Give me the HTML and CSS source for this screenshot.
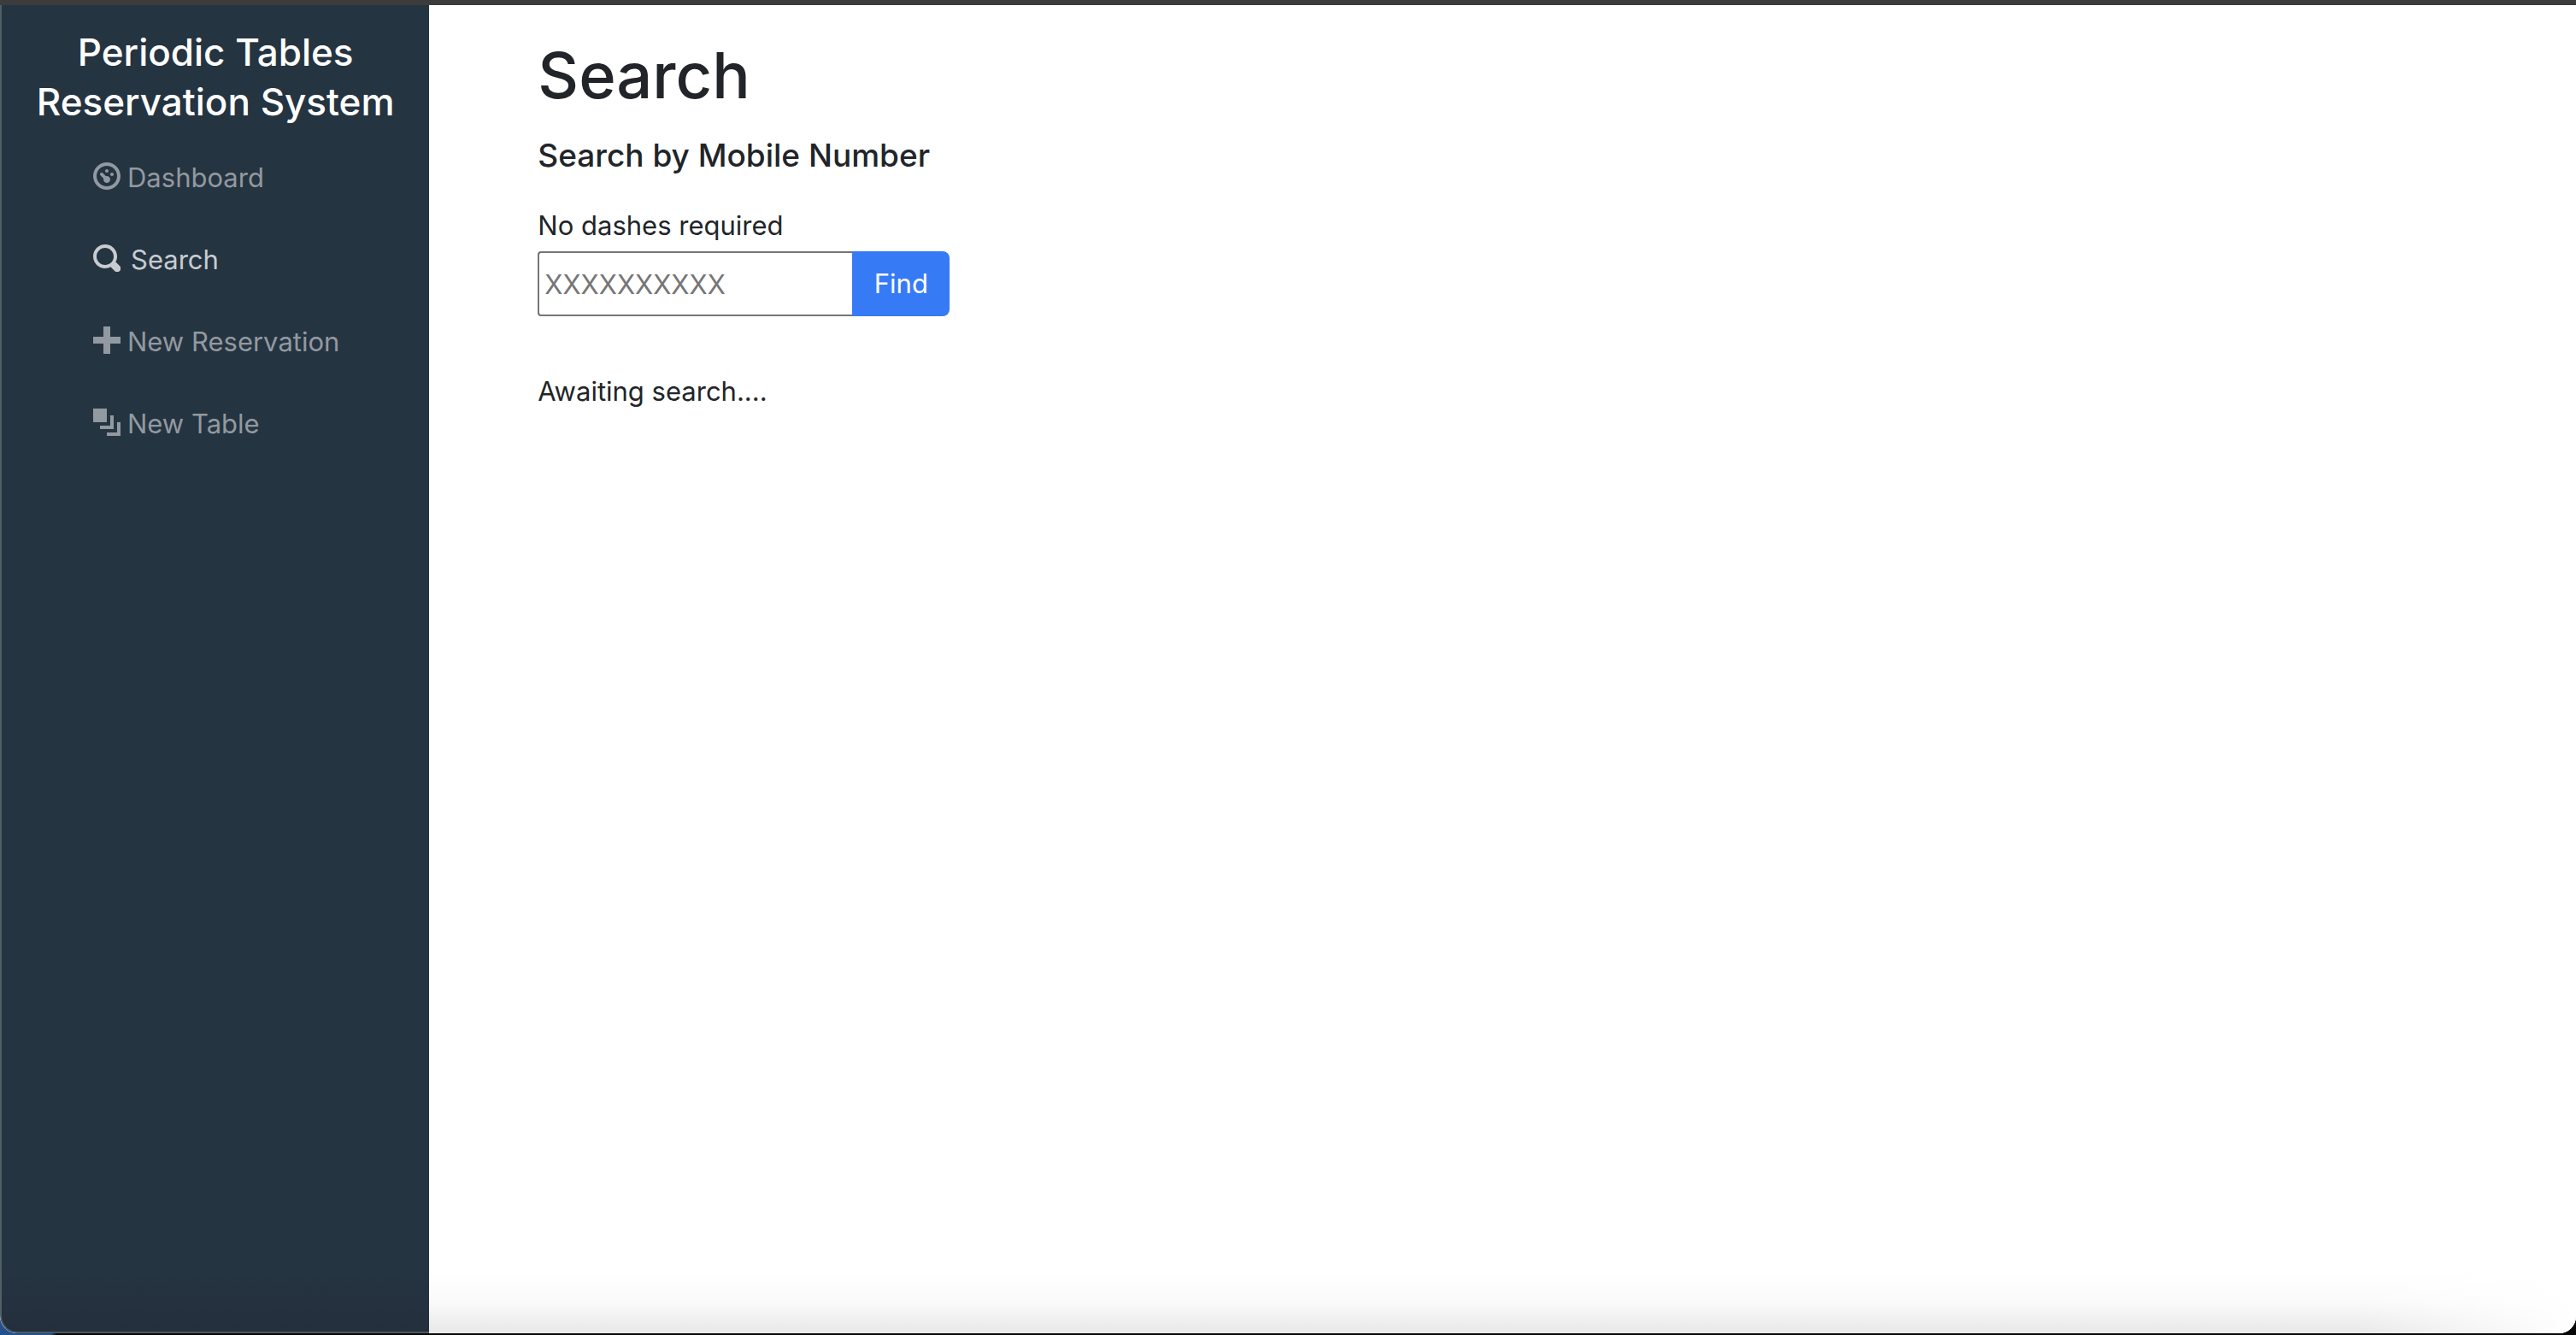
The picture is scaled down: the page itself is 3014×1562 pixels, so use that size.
FILE: index.html
```html
<!DOCTYPE html>
<html lang="en">
<head>
  <meta charset="utf-8">
  <meta name="viewport" content="width=device-width, initial-scale=1">
  <title>Periodic Tables Reservation System</title>
  <link rel="stylesheet" href="styles.css">
</head>
<body>
  <div class="window">
    <aside class="sidebar">
      <h2 class="brand">Periodic Tables Reservation System</h2>
      <nav class="nav">
        <a class="nav-link" href="#dashboard">
          <svg class="icon" viewBox="0 0 8 8" aria-hidden="true"><path d="M4 0c-2.2 0-4 1.8-4 4s1.8 4 4 4 4-1.8 4-4-1.8-4-4-4zm0 1c1.66 0 3 1.34 3 3s-1.34 3-3 3-3-1.34-3-3 1.34-3 3-3zm0 1c-.28 0-.5.22-.5.5s.22.5.5.5.5-.22.5-.5-.22-.5-.5-.5zm-1.66 1a.5.5 0 0 0-.19.84l.91.91c-.02.08-.06.16-.06.25 0 .55.45 1 1 1s1-.45 1-1-.45-1-1-1c-.09 0-.17.04-.25.06l-.91-.91a.5.5 0 0 0-.44-.16.5.5 0 0 0-.06 0zm3.16 0c-.28 0-.5.22-.5.5s.22.5.5.5.5-.22.5-.5-.22-.5-.5-.5z"/></svg>
          <span>Dashboard</span>
        </a>
        <a class="nav-link nav-link-active" href="#search" aria-current="page">
          <svg class="icon" viewBox="0 0 8 8" aria-hidden="true"><path d="M3.5 0c-1.93 0-3.5 1.57-3.5 3.5s1.57 3.5 3.5 3.5c.59 0 1.17-.14 1.66-.41a1 1 0 0 0 .13.13l1 1a1.02 1.02 0 1 0 1.44-1.44l-1-1a1 1 0 0 0-.16-.13c.27-.49.44-1.06.44-1.66 0-1.93-1.55-3.5-3.5-3.5zm0 1c1.39 0 2.5 1.11 2.5 2.5 0 .66-.24 1.27-.66 1.72l-.03.03a1 1 0 0 0-.13.13c-.44.4-1.04.63-1.69.63-1.39 0-2.5-1.11-2.5-2.5s1.11-2.5 2.5-2.5z"/></svg>
          <span>Search</span>
        </a>
        <a class="nav-link" href="#new-reservation">
          <svg class="icon" viewBox="0 0 8 8" aria-hidden="true"><path d="M3 0v3h-3v2h3v3h2v-3h3v-2h-3v-3h-2z"/></svg>
          <span>New Reservation</span>
        </a>
        <a class="nav-link" href="#new-table">
          <svg class="icon" viewBox="0 0 8 8" aria-hidden="true"><path d="M0 0v4h4v-4h-4zm5 2v3h-3v1h4v-4h-1zm2 2v3h-3v1h4v-4h-1z"/></svg>
          <span>New Table</span>
        </a>
      </nav>
    </aside>
    <main class="content">
      <h1 class="title">Search</h1>
      <h2 class="subtitle">Search by Mobile Number</h2>
      <form class="search-form">
        <label class="label" for="mobile">No dashes required</label>
        <div class="input-group">
          <input class="input" id="mobile" name="mobile" type="text" placeholder="XXXXXXXXXX">
          <button class="button" type="submit">Find</button>
        </div>
      </form>
      <p class="status">Awaiting search....</p>
    </main>
  </div>
</body>
</html>
```
FILE: styles.css
```css
* {
  box-sizing: border-box;
}

body {
  display: flex;
  min-height: 100vh;
  margin: 0;
  padding-bottom: 2px;
  background: linear-gradient(90deg, #24508f 60px, #080808 66px);
  color: #212529;
  font-family: Inter, "Liberation Sans", sans-serif;
  font-size: 31px;
  line-height: 48px;
}

.window {
  display: grid;
  flex: 1;
  grid-template-columns: 1fr 5fr;
  overflow: hidden;
  border-top: 6px solid #3c3c3c;
  border-radius: 0 0 20px 20px;
  background: #fff;
}

.sidebar {
  padding: 26px 16px;
  border-bottom: 2px solid #4a5860;
  border-left: 2px solid #535f67;
  border-bottom-left-radius: 20px;
  background: linear-gradient(#253441 0, #253441 calc(100% - 70px), #242f3c 100%);
}

.brand {
  margin: 0 0 12px;
  color: #fff;
  font-size: 44px;
  font-weight: 500;
  line-height: 58px;
  text-align: center;
}

.nav {
  display: flex;
  flex-direction: column;
  padding-left: 91px;
}

.nav-link {
  display: flex;
  gap: 8px;
  padding: 24px 0;
  color: #9299a0;
  text-decoration: none;
  white-space: nowrap;
}

.nav-link-active {
  gap: 12px;
  color: #c8ccd0;
}

.icon {
  width: 32px;
  height: 32px;
  margin-top: 6px;
  fill: currentColor;
}

.content {
  padding: 34px 127px;
  background: linear-gradient(90deg, transparent calc(100% - 260px), #fff 100%),
    linear-gradient(#fff calc(100% - 72px), #fafafa calc(100% - 36px), #e8e8e8 100%);
}

.title {
  margin: 0 0 22px;
  font-size: 74px;
  font-weight: 500;
  line-height: 96px;
}

.subtitle {
  margin: 0 0 34px;
  font-size: 37px;
  font-weight: 500;
  line-height: 48px;
}

.label {
  display: block;
  margin-bottom: 6px;
}

.input-group {
  display: flex;
}

.input {
  width: 368px;
  height: 76px;
  padding: 2px 6px;
  border: 2px solid #767676;
  border-right: 0;
  border-radius: 4px 0 0 4px;
  background: #fff;
  color: inherit;
  font: inherit;
}

.input::placeholder {
  color: #767676;
  opacity: 1;
}

.button {
  width: 114px;
  height: 76px;
  padding: 0;
  border: 0;
  border-radius: 0 8px 8px 0;
  background: #377af6;
  color: #fff;
  font: inherit;
}

.status {
  margin: 64px 0 0;
}
```
